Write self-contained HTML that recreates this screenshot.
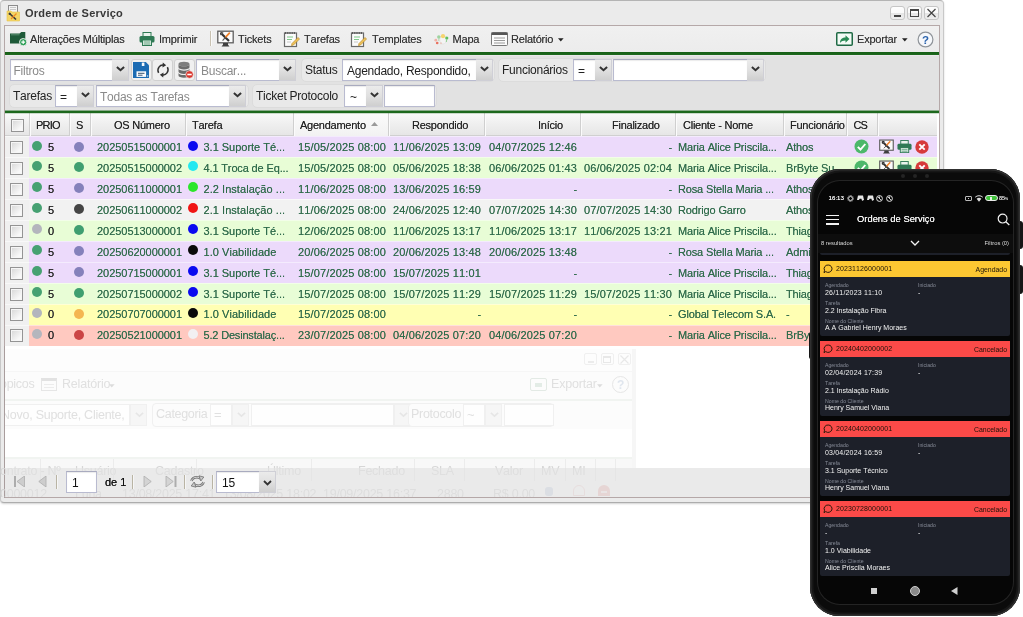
<!DOCTYPE html>
<html><head><meta charset="utf-8"><title>Ordem de Serviço</title>
<style>
*{margin:0;padding:0;box-sizing:border-box}
html,body{width:1023px;height:617px;overflow:hidden;background:#fff}
body{font-family:"Liberation Sans",sans-serif;font-size:11px;color:#222;position:relative;font-kerning:none;font-variant-ligatures:none}
#root{position:absolute;left:0;top:0;width:1023px;height:617px;overflow:hidden;will-change:transform;background:#fff}
.a{position:absolute}
.t{position:absolute;white-space:nowrap;line-height:14px;height:14px}
#win{left:0;top:0;width:944px;height:503px;background:#ebebeb;border:1px solid #c8c8c8;border-top-color:#b4b4b4;border-bottom-color:#adadad;border-radius:4px;box-shadow:0 1px 2px rgba(0,0,0,.18)}
#panel{left:4px;top:25px;width:936px;height:473px;border:1px solid #b5a8a8;background:#fff}
#tb1{left:5px;top:26px;width:934px;height:27px;background:linear-gradient(#f0f0f0,#ececec)}
.gl{left:5px;width:934px;height:2.600px;background:#1f6a1f}
#fbar{left:5px;top:55px;width:934px;height:58px;background:#e2e2e2}
.inp{position:absolute;background:#fff;border:1px solid #b9bbd0;border-top-color:#a9abbf;height:21px;box-shadow:inset 0 1px 1px rgba(0,0,0,.08)}
.trg{position:absolute;width:17px;height:21px;border:1px solid #cfcfd6;border-left:0;background:linear-gradient(#ebebeb,#e0e0e0 50%,#cfcfcf)}
.trg svg{position:absolute;left:4px;top:6px}
.grp{position:absolute;height:24px;border-radius:5px;background:#e9e9e9;border:1px solid #dcdcdc}
.f12{font-size:12px;color:#222;letter-spacing:-.25px}
.tb{color:#333;letter-spacing:-.2px;text-shadow:0 0 .3px rgba(50,50,50,.6)}
.ph{color:#8a8a8a}
#ghead{left:5px;top:113px;width:932px;height:23px;background:linear-gradient(#fafafa,#f0f0f0 45%,#e6e6e6);border-bottom:1px solid #d0d0d0}
.hs{position:absolute;top:113px;width:2px;height:23px;border-left:1px solid #cfcfcf;border-right:1px solid #fbfbfb}
.ht{top:118px;color:#222;letter-spacing:-.25px;text-shadow:0 0 .3px rgba(40,40,40,.7)}
.row{position:absolute;left:29px;width:908px;height:21px;border-top:1px solid rgba(255,255,255,.45)}
.ckc{position:absolute;left:5px;width:24px;height:21px;background:#f0f0f0;border-top:1px solid #f8f8f8}
.cb{position:absolute;left:10px;width:13px;height:13px;border:1px solid #949494;background:linear-gradient(135deg,#d6d6d6,#f8f8f8 75%);box-shadow:inset 0 0 0 1px #f6f6f6}
.dot{position:absolute;width:10px;height:10px;border-radius:50%}
.g{color:#2f6b4b;letter-spacing:-.15px;text-shadow:0 0 .35px rgba(47,107,75,.8)}
.d{letter-spacing:.15px}
.n{letter-spacing:-.05px}
.r{text-align:right}
</style></head>
<body>
<div id="root">
<div id="win" class="a"></div>
<div id="panel" class="a"></div>
<svg class="a" style="left:6px;top:4px" width="15" height="18" viewBox="0 0 15 18">
<rect x="2.5" y="1.5" width="9" height="7" fill="#f4f4f4" stroke="#8b8b8b"/>
<rect x="4" y="3" width="6" height="1" fill="#c8c8c8"/><rect x="4" y="5" width="6" height="1" fill="#c8c8c8"/>
<path d="M1 7 h4 l1 1 h7.5 v9 h-12.500z" fill="#f4d667" stroke="#e8c44a" stroke-width=".6"/>
<path d="M3.500 9.500 L10 15.500" stroke="#3a3a3a" stroke-width="1.700"/>
<path d="M3 9 l1.800 .5 M3 9 l.5 1.800" stroke="#3a3a3a" stroke-width="1.200"/>
<path d="M10.500 9.500 L5 15" stroke="#f08a24" stroke-width="1.300"/>
</svg>
<div class="t " style="left:25px;top:5.5px;font-weight:bold;font-size:11px;color:#383838;letter-spacing:0.24px">Ordem de Serviço</div>
<div class="a" style="left:890px;top:6px;width:15px;height:14px;border:1px solid #c6c6c6;border-radius:3px;background:linear-gradient(#fefefe,#fafafa 50%,#e6e6e6 52%,#efefef)"></div>
<div class="a" style="left:907px;top:6px;width:15px;height:14px;border:1px solid #c6c6c6;border-radius:3px;background:linear-gradient(#fefefe,#fafafa 50%,#e6e6e6 52%,#efefef)"></div>
<div class="a" style="left:924px;top:6px;width:15px;height:14px;border:1px solid #c6c6c6;border-radius:3px;background:linear-gradient(#fefefe,#fafafa 50%,#e6e6e6 52%,#efefef)"></div>
<div class="a" style="left:894px;top:15px;width:7px;height:2px;background:#444"></div>
<div class="a" style="left:910px;top:9px;width:9px;height:8px;border:1px solid #444;border-top-width:2px"></div>
<svg class="a" style="left:927px;top:8px" width="9" height="10" viewBox="0 0 9 10"><path d="M.5 1 L8.500 9 M8.500 1 L.5 9" stroke="#444" stroke-width="1.200"/></svg>
<div id="tb1" class="a"></div>
<div class="a gl" style="top:52px;height:3px;background:linear-gradient(#165e16,#1f6a1f)"></div><div class="a" style="left:5px;top:55px;width:934px;height:1px;background:#ebe8eb;z-index:1"></div>
<svg class="a" style="left:10px;top:32px" width="17" height="14" viewBox="0 0 17 14">
<path d="M0 1.500 h9.500 l1.800 -1.500 h4 v11.500 h-15.300z" fill="#1f5a39"/>
<path d="M1 2.800 h8.500" stroke="#5a8d6f" stroke-width="1"/>
<circle cx="13.200" cy="10.200" r="3.700" fill="#2fa058" stroke="#ececec" stroke-width="1"/>
<path d="M11.300 10.200 h3.800 M13.200 8.300 v3.800" stroke="#fff" stroke-width="1.200"/>
</svg>
<div class="t tb" style="left:30px;top:32px;">Alterações Múltiplas</div>
<svg class="a" style="left:139px;top:32px;opacity:1" width="16" height="14.0" viewBox="0 0 16 14">
<rect x="4" y=".5" width="8" height="4" fill="#e9f3ec" stroke="#2f7a55"/>
<rect x=".5" y="4" width="15" height="6.500" rx="1.500" fill="#2f7a55"/>
<rect x="3.500" y="8" width="9" height="5.500" fill="#cfe6d8" stroke="#2f7a55"/>
<path d="M5 10 h6 M5 12 h6" stroke="#5d9c7c" stroke-width=".8"/>
</svg>
<div class="t tb" style="left:159px;top:32px;">Imprimir</div>
<div class="a" style="left:210px;top:31px;width:2px;height:15px;border-left:1px solid #c9c2b2;border-right:1px solid #fafafa"></div>
<svg class="a" style="left:217px;top:30px" width="17.0" height="17.0" viewBox="0 0 17 17">
<rect x=".8" y="1.200" width="15.400" height="11.600" fill="#fbfbfb" stroke="#5e5e5e" stroke-width="1.300"/>
<path d="M4.500 16.400 h8 l-1.500 -1.600 v-1.800 h-5 v1.800z" fill="#3f3f3f"/>
<path d="M4.800 4 L12 11" stroke="#333" stroke-width="2.200"/>
<path d="M3.600 2.600 l2.600 .5 M3.600 2.600 l.5 2.600" stroke="#333" stroke-width="1.400"/>
<path d="M12.800 2.600 L8.400 7.400" stroke="#f0822a" stroke-width="1.700"/>
<path d="M8.400 7.400 L5.600 10.600" stroke="#555" stroke-width="1.100"/>
</svg>
<div class="t tb" style="left:238px;top:32px;">Tickets</div>
<svg class="a" style="left:283px;top:31px" width="18" height="17" viewBox="0 0 18 17">
<rect x="1.500" y="2" width="12" height="13.500" fill="#fbfbfb" stroke="#6a6a6a" stroke-width="1.200"/>
<path d="M2 2 h11" stroke="#444" stroke-width="1.600" stroke-dasharray="1.200 1"/>
<path d="M4 6 h6 M4 8.500 h5" stroke="#7fc98a" stroke-width="1.200"/>
<path d="M4 11 h4" stroke="#c8c8c8" stroke-width="1"/>
<path d="M9 12.500 L15 6.500 l1.500 1.500 L10.500 14 l-2 .6z" fill="#f1c45a" stroke="#b98b2a" stroke-width=".7"/>
</svg>
<div class="t tb" style="left:304px;top:32px;">Tarefas</div>
<svg class="a" style="left:350px;top:31px" width="18" height="17" viewBox="0 0 18 17">
<rect x="1.500" y="2" width="12" height="13.500" fill="#fbfbfb" stroke="#6a6a6a" stroke-width="1.200"/>
<path d="M2 2 h11" stroke="#444" stroke-width="1.600" stroke-dasharray="1.200 1"/>
<path d="M4 6 h6 M4 8.500 h5" stroke="#7fc98a" stroke-width="1.200"/>
<path d="M4 11 h4" stroke="#c8c8c8" stroke-width="1"/>
<path d="M9 12.500 L15 6.500 l1.500 1.500 L10.500 14 l-2 .6z" fill="#f1c45a" stroke="#b98b2a" stroke-width=".7"/>
</svg>
<div class="t tb" style="left:372px;top:32px;">Templates</div>
<svg class="a" style="left:433px;top:32px" width="16" height="14" viewBox="0 0 16 14">
<ellipse cx="10" cy="7.500" rx="3.200" ry="4.500" fill="#f4f4f4" stroke="#dcdcdc" stroke-width=".6"/>
<circle cx="10" cy="4.200" r="2.100" fill="#f5d46e"/>
<circle cx="5.800" cy="5" r="1.700" fill="#9fd39f"/><path d="M5.800 6 v3" stroke="#b5d9b5"/>
<circle cx="13.800" cy="6" r="1.600" fill="#5fbf5f"/><path d="M13.800 7 l-.5 3" stroke="#8fcf8f"/>
<circle cx="2.800" cy="8.200" r="1.400" fill="#f0b2a8"/>
<circle cx="4.200" cy="11" r="1.300" fill="#e8705e"/>
<circle cx="8" cy="11.300" r="1" fill="#e9c9c0"/>
</svg>
<div class="t tb" style="left:452.5px;top:32px;">Mapa</div>
<svg class="a" style="left:491px;top:32px" width="17" height="14" viewBox="0 0 17 14">
<rect x=".5" y=".5" width="16" height="13" rx="1" fill="#fbfbfb" stroke="#7a7a7a"/>
<rect x=".5" y=".5" width="16" height="2.500" fill="#555"/>
<path d="M3 6 h11 M3 8.500 h11 M3 11 h11" stroke="#9a9a9a" stroke-width="1"/>
</svg>
<div class="t tb" style="left:511px;top:32px;">Relatório</div>
<svg class="a" style="left:558px;top:38px" width="6" height="4"><path d="M0 .3 h5.600 l-2.800 3.200z" fill="#222"/></svg>
<svg class="a" style="left:836px;top:32px" width="17" height="14" viewBox="0 0 17 14">
<rect x=".75" y=".75" width="15.500" height="12.500" rx="1" fill="#f4fbf6" stroke="#1f6a45" stroke-width="1.500"/>
<path d="M4 11 c0 -4 2.500 -5.500 5.500 -5.500 v-2.200 l4 3.700 l-4 3.700 v-2.300 c-2.500 0 -4 .6 -5.500 2.600z" fill="#2a8a55"/>
</svg>
<div class="t tb" style="left:857px;top:32px;">Exportar</div>
<svg class="a" style="left:902px;top:38px" width="6" height="4"><path d="M0 .3 h5.600 l-2.800 3.200z" fill="#222"/></svg>
<svg class="a" style="left:917px;top:31px" width="17" height="17" viewBox="0 0 17 17">
<circle cx="8.500" cy="8.500" r="7.400" fill="#f6f8fb" stroke="#8f9499" stroke-width="1.200"/>
<text x="8.500" y="12.600" text-anchor="middle" font-family="Liberation Sans" font-weight="bold" font-size="11.500" fill="#2c64ad">?</text>
</svg>
<div id="fbar" class="a"></div>
<div class="a gl" style="top:110px;height:4px;background:linear-gradient(to bottom,rgba(31,106,31,.45) 0,rgba(31,106,31,.45) 1px,#1d681d 1px,#1d681d 3px,rgba(31,106,31,.22) 3px,rgba(31,106,31,.22) 4px);z-index:2"></div>
<div class="inp" style="left:9.5px;top:59px;width:103.5px;height:22px"><div class="t f12 ph" style="left:3px;top:4px">Filtros</div></div>
<div class="trg" style="left:112px;top:59px;height:22px"><svg width="9" height="6" viewBox="0 0 9 6"><path d="M.9 .9 L4.500 4.200 L8.100 .9" fill="none" stroke="#333" stroke-width="2"/></svg></div>
<div class="a" style="left:131px;top:59px;width:21px;height:22px;border:1px solid #d0d0d0;border-radius:3px;background:#f0f0f0"></div>
<svg class="a" style="left:133px;top:62px" width="16" height="16" viewBox="0 0 16 16">
<path d="M0 0 h12.800 l3.200 3.200 v12.800 h-16z" fill="#1b6bb3"/>
<rect x="8.800" y=".6" width="2.600" height="3.400" fill="#f4f8fc"/>
<rect x="3.500" y="9.300" width="9.600" height="5.600" fill="#fbfcfe"/>
<path d="M5 11.300 h6.500 M5 13.200 h4.500" stroke="#34506e" stroke-width="1"/>
<rect x="14.200" y="13.300" width="1" height="1.400" fill="#dfeaf5"/>
</svg>
<div class="a" style="left:152px;top:59px;width:21px;height:22px;border:1px solid #d0d0d0;border-radius:3px;background:#f0f0f0"></div>
<svg class="a" style="left:156px;top:62px" width="14" height="16" viewBox="0 0 14 16">
<path d="M2.600 10.800 A4.900 5.200 0 0 1 8 3.200" fill="none" stroke="#333" stroke-width="1.500"/>
<path d="M6.800 .6 l3.400 2.700 l-3.700 2.100z" fill="#333"/>
<path d="M11.400 5.200 A4.900 5.200 0 0 1 6 12.800" fill="none" stroke="#333" stroke-width="1.500"/>
<path d="M7.200 15.400 l-3.400 -2.700 l3.700 -2.100z" fill="#333"/>
</svg>
<div class="a" style="left:174px;top:59px;width:21px;height:22px;border:1px solid #d0d0d0;border-radius:3px;background:#f0f0f0"></div>
<svg class="a" style="left:177px;top:61px" width="17" height="18" viewBox="0 0 17 18">
<ellipse cx="7" cy="3" rx="5.500" ry="2.300" fill="#7d7d7d"/>
<path d="M1.500 3 v3.200 a5.500 2.300 0 0 0 11 0 v-3.200 a5.500 2.300 0 0 1 -11 0z" fill="#6c6c6c"/>
<path d="M1.500 7.400 v3.200 a5.500 2.300 0 0 0 11 0 v-3.200 a5.500 2.300 0 0 1 -11 0z" fill="#6c6c6c"/>
<path d="M1.500 11.800 v2.600 a5.500 2.300 0 0 0 11 0 v-2.600 a5.500 2.300 0 0 1 -11 0z" fill="#6c6c6c"/>
<circle cx="12.500" cy="13.500" r="3.800" fill="#d9342b" stroke="#f0f0f0" stroke-width=".6"/>
<rect x="10.300" y="12.700" width="4.400" height="1.600" fill="#fff"/>
</svg>
<div class="inp" style="left:196px;top:59px;width:84px;height:22px"><div class="t f12 ph" style="left:4px;top:4px">Buscar...</div></div>
<div class="trg" style="left:279px;top:59px;height:22px"><svg width="9" height="6" viewBox="0 0 9 6"><path d="M.9 .9 L4.500 4.200 L8.100 .9" fill="none" stroke="#333" stroke-width="2"/></svg></div>
<div class="grp" style="left:301px;top:58px;width:194px"></div>
<div class="t f12" style="left:305px;top:63px;">Status</div>
<div class="inp" style="left:342px;top:59px;width:135px;height:22px"><div class="t f12" style="left:4px;top:4px">Agendado, Respondido,</div></div>
<div class="trg" style="left:476px;top:59px;height:22px"><svg width="9" height="6" viewBox="0 0 9 6"><path d="M.9 .9 L4.500 4.200 L8.100 .9" fill="none" stroke="#333" stroke-width="2"/></svg></div>
<div class="grp" style="left:498px;top:58px;width:268px"></div>
<div class="t f12" style="left:502px;top:63px;">Funcionários</div>
<div class="inp" style="left:573px;top:59px;width:23px;height:22px"><div class="t f12" style="left:4px;top:4px">=</div></div>
<div class="trg" style="left:595px;top:59px;height:22px"><svg width="9" height="6" viewBox="0 0 9 6"><path d="M.9 .9 L4.500 4.200 L8.100 .9" fill="none" stroke="#333" stroke-width="2"/></svg></div>
<div class="inp" style="left:613px;top:59px;width:135px;height:22px"><div class="t f12" style="left:4px;top:4px"></div></div>
<div class="trg" style="left:747px;top:59px;height:22px"><svg width="9" height="6" viewBox="0 0 9 6"><path d="M.9 .9 L4.500 4.200 L8.100 .9" fill="none" stroke="#333" stroke-width="2"/></svg></div>
<div class="grp" style="left:9px;top:84px;width:240px"></div>
<div class="t f12" style="left:13px;top:88.5px;">Tarefas</div>
<div class="inp" style="left:55px;top:85px;width:23px;height:22px"><div class="t f12" style="left:4px;top:3.5px">=</div></div>
<div class="trg" style="left:77px;top:85px;height:22px"><svg width="9" height="6" viewBox="0 0 9 6"><path d="M.9 .9 L4.500 4.200 L8.100 .9" fill="none" stroke="#333" stroke-width="2"/></svg></div>
<div class="inp" style="left:96px;top:85px;width:134px;height:22px"><div class="t f12 ph" style="left:3px;top:3.5px">Todas as Tarefas</div></div>
<div class="trg" style="left:229px;top:85px;height:22px"><svg width="9" height="6" viewBox="0 0 9 6"><path d="M.9 .9 L4.500 4.200 L8.100 .9" fill="none" stroke="#333" stroke-width="2"/></svg></div>
<div class="grp" style="left:252px;top:84px;width:185px"></div>
<div class="t f12" style="left:256px;top:88.5px;">Ticket Protocolo</div>
<div class="inp" style="left:344px;top:85px;width:23px;height:22px"><div class="t f12" style="left:5px;top:3.5px">~</div></div>
<div class="trg" style="left:366px;top:85px;height:22px"><svg width="9" height="6" viewBox="0 0 9 6"><path d="M.9 .9 L4.500 4.200 L8.100 .9" fill="none" stroke="#333" stroke-width="2"/></svg></div>
<div class="inp" style="left:384px;top:85px;width:51px;height:22px"><div class="t f12" style="left:4px;top:3.5px"></div></div>
<div id="ghead" class="a"></div>
<div class="a" style="left:294px;top:113px;width:94px;height:23px;background:linear-gradient(#fbfbfb,#f2f2f2)"></div>
<div class="hs" style="left:28.5px"></div>
<div class="hs" style="left:68.5px"></div>
<div class="hs" style="left:89.5px"></div>
<div class="hs" style="left:184.5px"></div>
<div class="hs" style="left:293.0px"></div>
<div class="hs" style="left:388.0px"></div>
<div class="hs" style="left:483.5px"></div>
<div class="hs" style="left:579.5px"></div>
<div class="hs" style="left:675.0px"></div>
<div class="hs" style="left:782.5px"></div>
<div class="hs" style="left:846.0px"></div>
<div class="hs" style="left:876.5px"></div>
<div class="cb" style="top:119px;left:11px"></div>
<div class="t ht" style="left:36px;top:118px;letter-spacing:-.8px">PRIO</div>
<div class="t ht" style="left:76px;top:118px;">S</div>
<div class="t ht" style="left:114px;top:118px;">OS Número</div>
<div class="t ht" style="left:192px;top:118px;">Tarefa</div>
<div class="t ht" style="left:300px;top:118px;">Agendamento</div>
<svg class="a" style="left:371px;top:122px" width="7" height="4"><path d="M0 4 L3.500 0 L7 4z" fill="#9a9a9a"/></svg>
<div class="t ht" style="left:412px;top:118px;">Respondido</div>
<div class="t ht" style="left:538px;top:118px;">Início</div>
<div class="t ht" style="left:612px;top:118px;">Finalizado</div>
<div class="t ht" style="left:683px;top:118px;">Cliente - Nome</div>
<div class="t ht" style="left:790px;top:118px;">Funcionário</div>
<div class="t ht" style="left:853.5px;top:118px;letter-spacing:-1px">CS</div>
<div class="ckc" style="top:136px"></div>
<div class="row" style="top:136px;background:#ecdafb"></div>
<div class="cb" style="top:141.0px"></div>
<div class="dot" style="left:32px;top:140.5px;background:#46a172"></div>
<div class="t " style="left:48px;top:140.0px;color:#2c2c2c;font-size:11px;text-shadow:0 0 .6px #333">5</div>
<div class="dot" style="left:74px;top:141.5px;background:#8581bb"></div>
<div class="t r g n" style="right:841px;top:140.0px;">20250515000001</div>
<div class="dot" style="left:188px;top:140.5px;background:#0a0af0"></div>
<div class="t g" style="left:203.5px;top:140.0px;letter-spacing:-0.02px">3.1 Suporte Té...</div>
<div class="t g d" style="left:298px;top:140.0px;">15/05/2025 08:00</div>
<div class="t r g d" style="right:542px;top:140.0px;">11/06/2025 13:09</div>
<div class="t r g d" style="right:446px;top:140.0px;">04/07/2025 12:46</div>
<div class="t r g" style="right:351px;top:140.0px;">-</div>
<div class="t g" style="left:678px;top:140.0px;">Maria Alice Priscila...</div>
<div class="t g" style="left:786px;top:140.0px;">Athos</div>
<svg class="a" style="left:854px;top:139.0px" width="15" height="15" viewBox="0 0 15 15">
<circle cx="7.500" cy="7.500" r="7" fill="#4cb86a"/>
<path d="M3.800 7.800 L6.500 10.500 L11.300 5" fill="none" stroke="#fff" stroke-width="1.900"/>
</svg>
<svg class="a" style="left:879px;top:139.0px" width="14.96" height="14.96" viewBox="0 0 17 17">
<rect x=".8" y="1.200" width="15.400" height="11.600" fill="#fbfbfb" stroke="#5e5e5e" stroke-width="1.300"/>
<path d="M4.500 16.400 h8 l-1.500 -1.600 v-1.800 h-5 v1.800z" fill="#3f3f3f"/>
<path d="M4.800 4 L12 11" stroke="#333" stroke-width="2.200"/>
<path d="M3.600 2.600 l2.600 .5 M3.600 2.600 l.5 2.600" stroke="#333" stroke-width="1.400"/>
<path d="M12.800 2.600 L8.400 7.400" stroke="#f0822a" stroke-width="1.700"/>
<path d="M8.400 7.400 L5.600 10.600" stroke="#555" stroke-width="1.100"/>
</svg>
<svg class="a" style="left:897px;top:140.0px;opacity:1" width="15" height="13.125" viewBox="0 0 16 14">
<rect x="4" y=".5" width="8" height="4" fill="#e9f3ec" stroke="#2f7a55"/>
<rect x=".5" y="4" width="15" height="6.500" rx="1.500" fill="#2f7a55"/>
<rect x="3.500" y="8" width="9" height="5.500" fill="#cfe6d8" stroke="#2f7a55"/>
<path d="M5 10 h6 M5 12 h6" stroke="#5d9c7c" stroke-width=".8"/>
</svg>
<svg class="a" style="left:915px;top:140.0px" width="14" height="14" viewBox="0 0 14 14">
<circle cx="7" cy="7" r="6.700" fill="#d63a3a"/>
<path d="M4.300 4.300 L9.700 9.700 M9.700 4.300 L4.300 9.700" stroke="#fff" stroke-width="1.900"/>
</svg>
<div class="ckc" style="top:157px"></div>
<div class="row" style="top:157px;background:#e8fdd6"></div>
<div class="cb" style="top:161.93px"></div>
<div class="dot" style="left:32px;top:161.43px;background:#46a172"></div>
<div class="t " style="left:48px;top:160.93px;color:#2c2c2c;font-size:11px;text-shadow:0 0 .6px #333">5</div>
<div class="dot" style="left:74px;top:162.43px;background:#3f9f70"></div>
<div class="t r g n" style="right:841px;top:160.93px;">20250515000002</div>
<div class="dot" style="left:188px;top:161.43px;background:#22e8f0"></div>
<div class="t g" style="left:203.5px;top:160.93px;letter-spacing:-0.14px">4.1 Troca de Eq...</div>
<div class="t g d" style="left:298px;top:160.93px;">15/05/2025 08:00</div>
<div class="t r g d" style="right:542px;top:160.93px;">05/06/2025 18:38</div>
<div class="t r g d" style="right:446px;top:160.93px;">06/06/2025 01:43</div>
<div class="t r g d" style="right:351px;top:160.93px;">06/06/2025 02:04</div>
<div class="t g" style="left:678px;top:160.93px;">Maria Alice Priscila...</div>
<div class="t g" style="left:786px;top:160.93px;">BrByte Su...</div>
<svg class="a" style="left:854px;top:159.93px" width="15" height="15" viewBox="0 0 15 15">
<circle cx="7.500" cy="7.500" r="7" fill="#4cb86a"/>
<path d="M3.800 7.800 L6.500 10.500 L11.300 5" fill="none" stroke="#fff" stroke-width="1.900"/>
</svg>
<svg class="a" style="left:879px;top:159.93px" width="14.96" height="14.96" viewBox="0 0 17 17">
<rect x=".8" y="1.200" width="15.400" height="11.600" fill="#fbfbfb" stroke="#5e5e5e" stroke-width="1.300"/>
<path d="M4.500 16.400 h8 l-1.500 -1.600 v-1.800 h-5 v1.800z" fill="#3f3f3f"/>
<path d="M4.800 4 L12 11" stroke="#333" stroke-width="2.200"/>
<path d="M3.600 2.600 l2.600 .5 M3.600 2.600 l.5 2.600" stroke="#333" stroke-width="1.400"/>
<path d="M12.800 2.600 L8.400 7.400" stroke="#f0822a" stroke-width="1.700"/>
<path d="M8.400 7.400 L5.600 10.600" stroke="#555" stroke-width="1.100"/>
</svg>
<svg class="a" style="left:897px;top:160.93px;opacity:1" width="15" height="13.125" viewBox="0 0 16 14">
<rect x="4" y=".5" width="8" height="4" fill="#e9f3ec" stroke="#2f7a55"/>
<rect x=".5" y="4" width="15" height="6.500" rx="1.500" fill="#2f7a55"/>
<rect x="3.500" y="8" width="9" height="5.500" fill="#cfe6d8" stroke="#2f7a55"/>
<path d="M5 10 h6 M5 12 h6" stroke="#5d9c7c" stroke-width=".8"/>
</svg>
<svg class="a" style="left:915px;top:160.93px" width="14" height="14" viewBox="0 0 14 14">
<circle cx="7" cy="7" r="6.700" fill="#d63a3a"/>
<path d="M4.300 4.300 L9.700 9.700 M9.700 4.300 L4.300 9.700" stroke="#fff" stroke-width="1.900"/>
</svg>
<div class="ckc" style="top:178px"></div>
<div class="row" style="top:178px;background:#ecdafb"></div>
<div class="cb" style="top:182.86px"></div>
<div class="dot" style="left:32px;top:182.36px;background:#46a172"></div>
<div class="t " style="left:48px;top:181.86px;color:#2c2c2c;font-size:11px;text-shadow:0 0 .6px #333">5</div>
<div class="dot" style="left:74px;top:183.36px;background:#8581bb"></div>
<div class="t r g n" style="right:841px;top:181.86px;">20250611000001</div>
<div class="dot" style="left:188px;top:182.36px;background:#2be62b"></div>
<div class="t g" style="left:203.5px;top:181.86px;letter-spacing:0.05px">2.2 Instalação ...</div>
<div class="t g d" style="left:298px;top:181.86px;">11/06/2025 08:00</div>
<div class="t r g d" style="right:542px;top:181.86px;">13/06/2025 16:59</div>
<div class="t r g" style="right:446px;top:181.86px;">-</div>
<div class="t r g" style="right:351px;top:181.86px;">-</div>
<div class="t g" style="left:678px;top:181.86px;">Rosa Stella Maria ...</div>
<div class="t g" style="left:786px;top:181.86px;">Athos</div>
<div class="ckc" style="top:199px"></div>
<div class="row" style="top:199px;background:#f2f2f2"></div>
<div class="cb" style="top:203.79px"></div>
<div class="dot" style="left:32px;top:203.29px;background:#46a172"></div>
<div class="t " style="left:48px;top:202.79px;color:#2c2c2c;font-size:11px;text-shadow:0 0 .6px #333">5</div>
<div class="dot" style="left:74px;top:204.29px;background:#454545"></div>
<div class="t r g n" style="right:841px;top:202.79px;">20250611000002</div>
<div class="dot" style="left:188px;top:203.29px;background:#f01414"></div>
<div class="t g" style="left:203.5px;top:202.79px;letter-spacing:0.05px">2.1 Instalação ...</div>
<div class="t g d" style="left:298px;top:202.79px;">11/06/2025 08:00</div>
<div class="t r g d" style="right:542px;top:202.79px;">24/06/2025 12:40</div>
<div class="t r g d" style="right:446px;top:202.79px;">07/07/2025 14:30</div>
<div class="t r g d" style="right:351px;top:202.79px;">07/07/2025 14:30</div>
<div class="t g" style="left:678px;top:202.79px;">Rodrigo Garro</div>
<div class="t g" style="left:786px;top:202.79px;">Athos</div>
<div class="ckc" style="top:220px"></div>
<div class="row" style="top:220px;background:#e8fdd6"></div>
<div class="cb" style="top:224.72px"></div>
<div class="dot" style="left:32px;top:224.22px;background:#b4b6bd"></div>
<div class="t " style="left:48px;top:223.72px;color:#2c2c2c;font-size:11px;text-shadow:0 0 .6px #333">0</div>
<div class="dot" style="left:74px;top:225.22px;background:#3f9f70"></div>
<div class="t r g n" style="right:841px;top:223.72px;">20250513000001</div>
<div class="dot" style="left:188px;top:224.22px;background:#0a0af0"></div>
<div class="t g" style="left:203.5px;top:223.72px;letter-spacing:-0.02px">3.1 Suporte Té...</div>
<div class="t g d" style="left:298px;top:223.72px;">12/06/2025 08:00</div>
<div class="t r g d" style="right:542px;top:223.72px;">11/06/2025 13:17</div>
<div class="t r g d" style="right:446px;top:223.72px;">11/06/2025 13:17</div>
<div class="t r g d" style="right:351px;top:223.72px;">11/06/2025 13:21</div>
<div class="t g" style="left:678px;top:223.72px;">Maria Alice Priscila...</div>
<div class="t g" style="left:786px;top:223.72px;">Thiag...</div>
<div class="ckc" style="top:241px"></div>
<div class="row" style="top:241px;background:#ecdafb"></div>
<div class="cb" style="top:245.65px"></div>
<div class="dot" style="left:32px;top:245.15px;background:#46a172"></div>
<div class="t " style="left:48px;top:244.65px;color:#2c2c2c;font-size:11px;text-shadow:0 0 .6px #333">5</div>
<div class="dot" style="left:74px;top:246.15px;background:#8581bb"></div>
<div class="t r g n" style="right:841px;top:244.65px;">20250620000001</div>
<div class="dot" style="left:188px;top:245.15px;background:#0a0a0a"></div>
<div class="t g" style="left:203.5px;top:244.65px;letter-spacing:0.05px">1.0 Viabilidade</div>
<div class="t g d" style="left:298px;top:244.65px;">20/06/2025 08:00</div>
<div class="t r g d" style="right:542px;top:244.65px;">20/06/2025 13:48</div>
<div class="t r g d" style="right:446px;top:244.65px;">20/06/2025 13:48</div>
<div class="t r g" style="right:351px;top:244.65px;">-</div>
<div class="t g" style="left:678px;top:244.65px;">Rosa Stella Maria ...</div>
<div class="t g" style="left:786px;top:244.65px;">Admi...</div>
<div class="ckc" style="top:262px"></div>
<div class="row" style="top:262px;background:#ecdafb"></div>
<div class="cb" style="top:266.58px"></div>
<div class="dot" style="left:32px;top:266.08px;background:#46a172"></div>
<div class="t " style="left:48px;top:265.58px;color:#2c2c2c;font-size:11px;text-shadow:0 0 .6px #333">5</div>
<div class="dot" style="left:74px;top:267.08px;background:#8581bb"></div>
<div class="t r g n" style="right:841px;top:265.58px;">20250715000001</div>
<div class="dot" style="left:188px;top:266.08px;background:#0a0af0"></div>
<div class="t g" style="left:203.5px;top:265.58px;letter-spacing:-0.02px">3.1 Suporte Té...</div>
<div class="t g d" style="left:298px;top:265.58px;">15/07/2025 08:00</div>
<div class="t r g d" style="right:542px;top:265.58px;">15/07/2025 11:01</div>
<div class="t r g" style="right:446px;top:265.58px;">-</div>
<div class="t r g" style="right:351px;top:265.58px;">-</div>
<div class="t g" style="left:678px;top:265.58px;">Maria Alice Priscila...</div>
<div class="t g" style="left:786px;top:265.58px;">Thiag...</div>
<div class="ckc" style="top:283px"></div>
<div class="row" style="top:283px;background:#e8fdd6"></div>
<div class="cb" style="top:287.51px"></div>
<div class="dot" style="left:32px;top:287.01px;background:#46a172"></div>
<div class="t " style="left:48px;top:286.51px;color:#2c2c2c;font-size:11px;text-shadow:0 0 .6px #333">5</div>
<div class="dot" style="left:74px;top:288.01px;background:#3f9f70"></div>
<div class="t r g n" style="right:841px;top:286.51px;">20250715000002</div>
<div class="dot" style="left:188px;top:287.01px;background:#0a0af0"></div>
<div class="t g" style="left:203.5px;top:286.51px;letter-spacing:-0.02px">3.1 Suporte Té...</div>
<div class="t g d" style="left:298px;top:286.51px;">15/07/2025 08:00</div>
<div class="t r g d" style="right:542px;top:286.51px;">15/07/2025 11:29</div>
<div class="t r g d" style="right:446px;top:286.51px;">15/07/2025 11:29</div>
<div class="t r g d" style="right:351px;top:286.51px;">15/07/2025 11:30</div>
<div class="t g" style="left:678px;top:286.51px;">Maria Alice Priscila...</div>
<div class="t g" style="left:786px;top:286.51px;">Thiag...</div>
<div class="ckc" style="top:304px"></div>
<div class="row" style="top:304px;background:#ffffb3"></div>
<div class="cb" style="top:308.44px"></div>
<div class="dot" style="left:32px;top:307.94px;background:#b4b6bd"></div>
<div class="t " style="left:48px;top:307.44px;color:#2c2c2c;font-size:11px;text-shadow:0 0 .6px #333">0</div>
<div class="dot" style="left:74px;top:308.94px;background:#f4b650"></div>
<div class="t r g n" style="right:841px;top:307.44px;">20250707000001</div>
<div class="dot" style="left:188px;top:307.94px;background:#0a0a0a"></div>
<div class="t g" style="left:203.5px;top:307.44px;letter-spacing:0.05px">1.0 Viabilidade</div>
<div class="t g d" style="left:298px;top:307.44px;">15/07/2025 08:00</div>
<div class="t r g" style="right:542px;top:307.44px;">-</div>
<div class="t r g" style="right:446px;top:307.44px;">-</div>
<div class="t r g" style="right:351px;top:307.44px;">-</div>
<div class="t g" style="left:678px;top:307.44px;">Global Telecom S.A.</div>
<div class="t g" style="left:786px;top:307.44px;">-</div>
<div class="ckc" style="top:325px"></div>
<div class="row" style="top:325px;background:#ffc9c0"></div>
<div class="cb" style="top:329.37px"></div>
<div class="dot" style="left:32px;top:328.87px;background:#b4b6bd"></div>
<div class="t " style="left:48px;top:328.37px;color:#2c2c2c;font-size:11px;text-shadow:0 0 .6px #333">0</div>
<div class="dot" style="left:74px;top:329.87px;background:#cb4545"></div>
<div class="t r g n" style="right:841px;top:328.37px;">20250521000001</div>
<div class="dot" style="left:188px;top:328.87px;background:#f2f0f2"></div>
<div class="t g" style="left:203.5px;top:328.37px;letter-spacing:-0.18px">5.2 Desinstalaç...</div>
<div class="t g d" style="left:298px;top:328.37px;">23/07/2025 08:00</div>
<div class="t r g d" style="right:542px;top:328.37px;">04/06/2025 07:20</div>
<div class="t r g d" style="right:446px;top:328.37px;">04/06/2025 07:20</div>
<div class="t r g" style="right:351px;top:328.37px;">-</div>
<div class="t g" style="left:678px;top:328.37px;">Maria Alice Priscila...</div>
<div class="t g" style="left:786px;top:328.37px;">BrBy...</div>
<div class="a" style="left:5px;top:349px;width:629px;height:23px;background:#fdfdfd"></div>
<div class="a" style="left:5px;top:371px;width:629px;height:1px;background:#f6f6f6"></div>
<div class="a" style="left:5px;top:372px;width:629px;height:27px;background:#fcfcfc"></div>
<div class="a" style="left:5px;top:399px;width:629px;height:2px;background:#f1f4f1"></div>
<div class="a" style="left:5px;top:401px;width:629px;height:28px;background:#fcfcfc"></div>
<div class="a" style="left:5px;top:457px;width:629px;height:2px;background:#f1f4f1"></div>
<div class="a" style="left:5px;top:459px;width:629px;height:9px;background:#f8f8f8"></div>
<div class="a" style="left:632px;top:349px;width:4px;height:119px;background:#f6f6f6"></div>
<div class="a" style="left:-2px;top:404px;width:132px;height:22px;border:1px solid #f0f0f0;background:#fefefe;"></div>
<div class="a" style="left:130px;top:404px;width:17px;height:22px;border:1px solid #f0f0f0;background:#fefefe;background:#f6f6f6"></div>
<div class="a" style="left:152px;top:403px;width:262px;height:24px;border:1px solid #f0f0f0;background:#fefefe;border-radius:4px;background:#fcfcfc"></div>
<div class="a" style="left:210px;top:404px;width:22px;height:22px;border:1px solid #f0f0f0;background:#fefefe;"></div>
<div class="a" style="left:232px;top:404px;width:17px;height:22px;border:1px solid #f0f0f0;background:#fefefe;background:#f6f6f6"></div>
<div class="a" style="left:251px;top:404px;width:143px;height:22px;border:1px solid #f0f0f0;background:#fefefe;"></div>
<div class="a" style="left:394px;top:404px;width:17px;height:22px;border:1px solid #f0f0f0;background:#fefefe;background:#f6f6f6"></div>
<div class="a" style="left:408px;top:403px;width:146px;height:24px;border:1px solid #f0f0f0;background:#fefefe;border-radius:4px;background:#fcfcfc"></div>
<div class="a" style="left:463px;top:404px;width:22px;height:22px;border:1px solid #f0f0f0;background:#fefefe;"></div>
<div class="a" style="left:485px;top:404px;width:17px;height:22px;border:1px solid #f0f0f0;background:#fefefe;background:#f6f6f6"></div>
<div class="a" style="left:504px;top:404px;width:50px;height:22px;border:1px solid #f0f0f0;background:#fefefe;"></div>
<div class="t " style="left:0px;top:377px;color:#e0e0e0;font-size:12.500px;letter-spacing:-.3px">ópicos</div>
<div class="a" style="left:41px;top:378px;width:16px;height:13px;border:1px solid #e6e6e6;border-top:3px solid #e2e2e2"></div>
<div class="a" style="left:44px;top:384px;width:10px;height:1px;background:#ececec"></div><div class="a" style="left:44px;top:387px;width:10px;height:1px;background:#ececec"></div>
<div class="t " style="left:62px;top:377px;color:#e0e0e0;font-size:12.500px;letter-spacing:-.2px">Relatório</div>
<svg class="a" style="left:109px;top:384px" width="6" height="4"><path d="M0 .3 h5.600 l-2.800 3.200z" fill="#dcdcdc"/></svg>
<div class="t " style="left:1px;top:408px;color:#e0e0e0;font-size:12.500px;letter-spacing:-.25px">Novo, Suporte, Cliente,</div>
<div class="t " style="left:156px;top:407px;color:#e0e0e0;font-size:12.500px;letter-spacing:-.3px">Categoria</div>
<div class="t " style="left:214px;top:408px;color:#e0e0e0;font-size:13px">=</div>
<div class="t " style="left:411px;top:407px;color:#e0e0e0;font-size:12.500px;letter-spacing:-.3px">Protocolo</div>
<div class="t " style="left:467px;top:408px;color:#e0e0e0;font-size:13px">~</div>
<svg class="a" style="left:135px;top:412px" width="9" height="6" viewBox="0 0 9 6"><path d="M.9 .9 L4.500 4.200 L8.100 .9" fill="none" stroke="#e6e6e6" stroke-width="1.600"/></svg>
<svg class="a" style="left:237px;top:412px" width="9" height="6" viewBox="0 0 9 6"><path d="M.9 .9 L4.500 4.200 L8.100 .9" fill="none" stroke="#e6e6e6" stroke-width="1.600"/></svg>
<svg class="a" style="left:399px;top:412px" width="9" height="6" viewBox="0 0 9 6"><path d="M.9 .9 L4.500 4.200 L8.100 .9" fill="none" stroke="#e6e6e6" stroke-width="1.600"/></svg>
<svg class="a" style="left:490px;top:412px" width="9" height="6" viewBox="0 0 9 6"><path d="M.9 .9 L4.500 4.200 L8.100 .9" fill="none" stroke="#e6e6e6" stroke-width="1.600"/></svg>
<div class="t " style="left:551px;top:377px;color:#e0e0e0;font-size:12.500px;letter-spacing:-.2px">Exportar</div>
<svg class="a" style="left:597px;top:384px" width="6" height="4"><path d="M0 .3 h5.600 l-2.800 3.200z" fill="#dcdcdc"/></svg>
<div class="a" style="left:530px;top:378px;width:17px;height:13px;border:1.500px solid #e3eae5;border-radius:2px"></div>
<div class="a" style="left:535px;top:383px;width:7px;height:4px;background:#e3ece6"></div>
<div class="a" style="left:612px;top:376px;width:17px;height:17px;border:1.500px solid #e6e6e6;border-radius:50%"></div>
<div class="t " style="left:617px;top:378px;color:#e0e6ee;font-weight:bold;font-size:12px">?</div>
<div class="a" style="left:584px;top:353px;width:13px;height:12px;border:1px solid #f0f0f0;border-radius:2px"></div>
<div class="a" style="left:601px;top:353px;width:13px;height:12px;border:1px solid #f0f0f0;border-radius:2px"></div>
<div class="a" style="left:618px;top:353px;width:13px;height:12px;border:1px solid #f0f0f0;border-radius:2px"></div>
<div class="a" style="left:588px;top:361px;width:6px;height:2px;background:#ececec"></div>
<div class="a" style="left:603px;top:356px;width:8px;height:7px;border:1px solid #e8e8e8;border-top-width:2px"></div>
<svg class="a" style="left:620px;top:355px" width="9" height="9" viewBox="0 0 9 9"><path d="M.5 .5 L8.500 8.500 M8.500 .5 L.5 8.500" stroke="#e8e8e8" stroke-width="1.200"/></svg>
<div class="a" style="left:0;top:346px;width:4px;height:152px;background:#ebebeb;border-left:1px solid #c8c8c8"></div>
<div class="a" style="left:4px;top:346px;width:1px;height:152px;background:#a99d9d"></div>
<div class="t f12" style="left:0px;top:464px;color:#d6d6d6;font-size:12.500px">ontrato - Nº</div>
<div class="t f12" style="left:75px;top:464px;color:#d6d6d6;font-size:12.500px">Usuário</div>
<div class="t f12" style="left:155px;top:464px;color:#d6d6d6;font-size:12.500px">Cadastro</div>
<div class="t f12" style="left:267px;top:464px;color:#d6d6d6;font-size:12.500px">Último</div>
<div class="t f12" style="left:358px;top:464px;color:#d6d6d6;font-size:12.500px">Fechado</div>
<div class="t f12" style="left:431px;top:464px;color:#d6d6d6;font-size:12.500px">SLA</div>
<div class="t f12" style="left:495px;top:464px;color:#d6d6d6;font-size:12.500px">Valor</div>
<div class="t f12" style="left:541px;top:464px;color:#d6d6d6;font-size:12.500px">MV</div>
<div class="t f12" style="left:572px;top:464px;color:#d6d6d6;font-size:12.500px">MI</div>
<div class="a" style="left:40px;top:459px;width:1px;height:22px;background:#ececec"></div>
<div class="a" style="left:113px;top:459px;width:1px;height:22px;background:#ececec"></div>
<div class="a" style="left:196px;top:459px;width:1px;height:22px;background:#ececec"></div>
<div class="a" style="left:311px;top:459px;width:1px;height:22px;background:#ececec"></div>
<div class="a" style="left:414px;top:459px;width:1px;height:22px;background:#ececec"></div>
<div class="a" style="left:464px;top:459px;width:1px;height:22px;background:#ececec"></div>
<div class="a" style="left:534px;top:459px;width:1px;height:22px;background:#ececec"></div>
<div class="a" style="left:565px;top:459px;width:1px;height:22px;background:#ececec"></div>
<div class="a" style="left:595px;top:459px;width:1px;height:22px;background:#ececec"></div>
<div class="a" style="left:615px;top:459px;width:1px;height:22px;background:#ececec"></div>
<div class="t f12" style="left:0px;top:486.5px;color:#d2d2d2;font-size:12.500px;height:10px;overflow:hidden">0000012</div>
<div class="t f12" style="left:75px;top:486.5px;color:#d2d2d2;font-size:12.500px;height:10px;overflow:hidden">Luna</div>
<div class="t f12" style="left:122px;top:486.5px;color:#d2d2d2;font-size:12.500px;height:10px;overflow:hidden">13/08/2025 17:41</div>
<div class="t f12" style="left:223px;top:486.5px;color:#d2d2d2;font-size:12.500px;height:10px;overflow:hidden">13/08/2025 18:02</div>
<div class="t f12" style="left:323px;top:486.5px;color:#d2d2d2;font-size:12.500px;height:10px;overflow:hidden">19/09/2025 16:37</div>
<div class="t f12" style="left:437px;top:486.5px;color:#d2d2d2;font-size:12.500px;height:10px;overflow:hidden">2880</div>
<div class="t f12" style="left:493px;top:486.5px;color:#d2d2d2;font-size:12.500px;height:10px;overflow:hidden">R$ 0,00</div>
<div class="a" style="left:545px;top:487px;width:8px;height:9px;border-radius:3px;background:#c9d3e6"></div>
<div class="a" style="left:573px;top:485px;width:12px;height:11px;border-radius:6px 6px 0 0;border:1.500px solid #f1cfcf"></div>
<div class="a" style="left:598px;top:485px;width:12px;height:11px;border-radius:6px 6px 0 0;background:#f0b4b0"></div>
<div class="a" style="left:601px;top:491px;width:6px;height:2px;background:#fbe9e9"></div>
<div class="a" style="left:5px;top:468px;width:934px;height:29px;background:rgba(226,226,226,.72)"></div>
<svg class="a" style="left:14px;top:476px" width="11" height="11"><rect x="0" y="0" width="2" height="11" fill="#adadad"/><path d="M10.500 0 L3 5.500 L10.500 11z" fill="#cdcdcd" stroke="#adadad" stroke-width=".8"/></svg>
<svg class="a" style="left:38px;top:476px" width="9" height="11"><path d="M8 0 L.8 5.500 L8 11z" fill="#cdcdcd" stroke="#adadad" stroke-width=".8"/></svg>
<div class="a" style="left:56px;top:475px;width:2px;height:14px;border-left:1px solid #b9b4a4;border-right:1px solid #f6f6f6"></div>
<div class="a" style="left:132px;top:475px;width:2px;height:14px;border-left:1px solid #b9b4a4;border-right:1px solid #f6f6f6"></div>
<div class="a" style="left:184px;top:475px;width:2px;height:14px;border-left:1px solid #b9b4a4;border-right:1px solid #f6f6f6"></div>
<div class="a" style="left:212px;top:475px;width:2px;height:14px;border-left:1px solid #b9b4a4;border-right:1px solid #f6f6f6"></div>
<div class="inp" style="left:66px;top:471px;width:31px;height:22px"><div class="t f12" style="left:5px;top:4px;color:#111">1</div></div>
<div class="t " style="left:105px;top:475px;font-size:11px;color:#111;text-shadow:0 0 .5px #333">de 1</div>
<svg class="a" style="left:143px;top:476px" width="9" height="11"><path d="M1 0 L8.200 5.500 L1 11z" fill="#d4d4d4" stroke="#adadad" stroke-width=".8"/></svg>
<svg class="a" style="left:165px;top:476px" width="12" height="11"><path d="M1 0 L8.200 5.500 L1 11z" fill="#d4d4d4" stroke="#adadad" stroke-width=".8"/><rect x="9.500" y="0" width="2" height="11" fill="#adadad"/></svg>
<svg class="a" style="left:190px;top:474px" width="15" height="15" viewBox="0 0 15 15">
<path d="M1.500 7 C2 3.500 7 2 10.500 4.500" fill="none" stroke="#6f6f6f" stroke-width="2.400"/>
<path d="M1.500 7 C2 3.500 7 2 10.500 4.500" fill="none" stroke="#d8d8d8" stroke-width="1"/>
<path d="M9 1.800 l4.800 1.200 l-3 4z" fill="#c8c8c8" stroke="#6f6f6f" stroke-width=".8"/>
<path d="M13.500 8 C13 11.500 8 13 4.500 10.500" fill="none" stroke="#6f6f6f" stroke-width="2.400"/>
<path d="M13.500 8 C13 11.500 8 13 4.500 10.500" fill="none" stroke="#d8d8d8" stroke-width="1"/>
<path d="M6 13.200 l-4.800 -1.200 l3 -4z" fill="#c8c8c8" stroke="#6f6f6f" stroke-width=".8"/>
</svg>
<div class="inp" style="left:216px;top:471px;width:44px;height:22px"><div class="t f12" style="left:5px;top:4px;color:#111">15</div></div>
<div class="trg" style="left:259px;top:471px;height:22px"><svg style="left:4px;top:8px;position:absolute" width="9" height="6" viewBox="0 0 9 6"><path d="M1 1 L4.500 4.500 L8 1" fill="none" stroke="#333" stroke-width="1.800"/></svg></div>
<div class="a" style="left:1017px;top:221px;width:6px;height:28px;background:#161616;border-radius:0 3px 3px 0"></div>
<div class="a" style="left:1017px;top:265px;width:6px;height:29px;background:#161616;border-radius:0 3px 3px 0"></div>
<div class="a" style="left:808.500px;top:332px;width:4px;height:27px;background:#161616;border-radius:2px 0 0 2px"></div>
<div class="a" style="left:810px;top:169px;width:210px;height:447px;border-radius:30px 30px 29px 29px;background:#0b0b0b;box-shadow:inset 0 0 0 1.500px #303030, inset 0 0 0 3.500px #171717"></div>
<div class="a" style="left:818px;top:181px;width:195px;height:423px;border-radius:22px;background:#060606;box-shadow:0 0 0 1px #242424"></div>
<div class="a" style="left:901px;top:174px;width:4px;height:4px;border-radius:50%;background:#242424"></div>
<div class="a" style="left:913px;top:174px;width:4px;height:4px;border-radius:50%;background:#242424"></div>
<div class="a" style="left:925px;top:174px;width:4px;height:4px;border-radius:50%;background:#242424"></div>
<div class="t" style="left:828.5px;top:194px;font-size:6.2px;line-height:8.2px;height:8.2px;color:#ececec;font-weight:normal;text-shadow:0 0 .3px #fff">16:13</div>
<svg class="a" style="left:846.500px;top:194.500px" width="7" height="7" viewBox="0 0 7 7"><circle cx="3.500" cy="3.500" r="2" fill="none" stroke="#d8d8d8" stroke-width="1"/><circle cx="3.500" cy="3.500" r="3" fill="none" stroke="#d8d8d8" stroke-width="1" stroke-dasharray="1 1.300"/></svg>
<svg class="a" style="left:856.5px;top:195px" width="7" height="6" viewBox="0 0 7 6"><path d="M1 .5 h5 l1 4.500 h-2 l-.6 -1.200 h-1.800 l-.6 1.200 h-2z" fill="#e6e6e6"/><circle cx="5.600" cy="4.800" r=".9" fill="#e6e6e6"/></svg>
<svg class="a" style="left:866.5px;top:195px" width="7" height="6" viewBox="0 0 7 6"><path d="M1 .5 h5 l1 4.500 h-2 l-.6 -1.200 h-1.800 l-.6 1.200 h-2z" fill="#e6e6e6"/><circle cx="5.600" cy="4.800" r=".9" fill="#e6e6e6"/></svg>
<svg class="a" style="left:876px;top:194.500px" width="7" height="7" viewBox="0 0 7 7"><circle cx="3.500" cy="3.500" r="2.900" fill="none" stroke="#e2e2e2" stroke-width="1"/><path d="M1.800 1.800 L5.200 5.200 M3.500 1.500 v2" stroke="#e2e2e2" stroke-width=".9"/></svg>
<svg class="a" style="left:886px;top:194.500px" width="7" height="7" viewBox="0 0 7 7"><circle cx="3.500" cy="3.500" r="2.900" fill="none" stroke="#e2e2e2" stroke-width="1"/><path d="M1.800 1.800 L5.200 5.200 M3.500 1.500 v2" stroke="#e2e2e2" stroke-width=".9"/></svg>
<div class="a" style="left:964.500px;top:195.500px;width:7.500px;height:5.500px;border:1px solid #bbb;border-radius:1px"></div>
<div class="a" style="left:967.500px;top:197.500px;width:1.500px;height:1.500px;background:#ccc"></div>
<svg class="a" style="left:974.500px;top:194.500px" width="8" height="7" viewBox="0 0 8 7"><path d="M.2 2.200 A5.600 5.600 0 0 1 7.800 2.200" fill="none" stroke="#ddd" stroke-width="1"/><path d="M1.600 3.800 A3.600 3.600 0 0 1 6.400 3.800 L4 6.800z" fill="#ddd"/></svg>
<div class="a" style="left:985px;top:195px;width:12.500px;height:6px;border-radius:3px;background:#3fc13a;border:1px solid #e8e8e8"></div>
<div class="a" style="left:989.500px;top:196.500px;width:2.500px;height:3px;background:#e6f7e3"></div>
<div class="t" style="left:999px;top:194.5px;font-size:5.5px;line-height:7.5px;height:7.5px;color:#e8e8e8;font-weight:bold;">85</div>
<div class="t" style="left:1005px;top:196.5px;font-size:3.5px;line-height:5.5px;height:5.5px;color:#e8e8e8;font-weight:bold;">%</div>
<div class="a" style="left:826.300px;top:214.7px;width:13.200px;height:1.300px;background:#f2f2f2"></div>
<div class="a" style="left:826.300px;top:219.0px;width:13.200px;height:1.300px;background:#f2f2f2"></div>
<div class="a" style="left:826.300px;top:223.29999999999998px;width:13.200px;height:1.300px;background:#f2f2f2"></div>
<div class="t" style="left:857px;top:213px;font-size:9.4px;line-height:11.4px;height:11.4px;color:#f4f4f4;font-weight:normal;text-shadow:0 0 .4px #fff">Ordens de Serviço</div>
<svg class="a" style="left:997px;top:212.500px" width="13" height="13" viewBox="0 0 13 13"><circle cx="5.600" cy="5.600" r="4.400" fill="none" stroke="#f2f2f2" stroke-width="1.200"/><path d="M8.800 8.800 L12.300 12" stroke="#f2f2f2" stroke-width="1.300"/></svg>
<div class="a" style="left:818px;top:234px;width:195px;height:19px;background:#0d0d0d"></div>
<div class="t" style="left:821px;top:240px;font-size:5.8px;line-height:7.8px;height:7.8px;color:#dadada;font-weight:normal;">8 resultados</div>
<svg class="a" style="left:910px;top:240px" width="10" height="7" viewBox="0 0 10 7"><path d="M1 1 L5 5 L9 1" fill="none" stroke="#f4f4f4" stroke-width="1.300"/></svg>
<div class="t r" style="right:14px;top:240px;font-size:5.8px;line-height:7.8px;height:7.8px;color:#dadada;font-weight:normal;">Filtros (0)</div>
<div class="a" style="left:820px;top:253px;width:190px;height:2px;background:#1d2029;border-radius:0 0 2px 2px"></div>
<div class="a" style="left:820px;top:261px;width:190px;height:16px;background:#fcc732"></div>
<div class="a" style="left:820px;top:277px;width:190px;height:59px;background:#1d2029;border-radius:0 0 2px 2px"></div>
<svg class="a" style="left:823px;top:264px" width="10" height="10" viewBox="0 0 10 10"><path d="M5.200 1 A3.900 3.700 0 1 1 2.700 7.600 L1 8.700 L1.500 6.300 A3.900 3.700 0 0 1 5.200 1z" fill="none" stroke="#2a1a0a" stroke-width="1"/></svg>
<div class="t" style="left:836px;top:264px;font-size:7px;line-height:9px;height:9px;color:#1a1208;font-weight:normal;letter-spacing:.12px">20231126000001</div>
<div class="t r" style="right:16px;top:266.2px;font-size:6.9px;line-height:8.9px;height:8.9px;color:#1a1208;font-weight:normal;">Agendado</div>
<div class="t" style="left:825px;top:281.7px;font-size:5.2px;line-height:7.2px;height:7.2px;color:#858a96;font-weight:normal;">Agendado</div>
<div class="t" style="left:918px;top:281.7px;font-size:5.2px;line-height:7.2px;height:7.2px;color:#858a96;font-weight:normal;">Iniciado</div>
<div class="t" style="left:825px;top:287.5px;font-size:7px;line-height:9px;height:9px;color:#f2f2f2;font-weight:normal;letter-spacing:.18px">26/11/2023 11:10</div>
<div class="t" style="left:918px;top:287.5px;font-size:7px;line-height:9px;height:9px;color:#f2f2f2;font-weight:normal;">-</div>
<div class="t" style="left:825px;top:299.5px;font-size:5.2px;line-height:7.2px;height:7.2px;color:#858a96;font-weight:normal;">Tarefa</div>
<div class="t" style="left:825px;top:305.5px;font-size:7px;line-height:9px;height:9px;color:#f2f2f2;font-weight:normal;">2.2 Instalação Fibra</div>
<div class="t" style="left:825px;top:317.5px;font-size:5.2px;line-height:7.2px;height:7.2px;color:#858a96;font-weight:normal;">Nome do Cliente</div>
<div class="t" style="left:825px;top:323px;font-size:7px;line-height:9px;height:9px;color:#f2f2f2;font-weight:normal;">A A Gabriel Henry Moraes</div>
<div class="a" style="left:820px;top:341px;width:190px;height:16px;background:#fb4a48"></div>
<div class="a" style="left:820px;top:357px;width:190px;height:59px;background:#1d2029;border-radius:0 0 2px 2px"></div>
<svg class="a" style="left:823px;top:344px" width="10" height="10" viewBox="0 0 10 10"><path d="M5.200 1 A3.900 3.700 0 1 1 2.700 7.600 L1 8.700 L1.500 6.300 A3.900 3.700 0 0 1 5.200 1z" fill="none" stroke="#2a1a0a" stroke-width="1"/></svg>
<div class="t" style="left:836px;top:344px;font-size:7px;line-height:9px;height:9px;color:#1a1208;font-weight:normal;letter-spacing:.12px">20240402000002</div>
<div class="t r" style="right:16px;top:346.2px;font-size:6.9px;line-height:8.9px;height:8.9px;color:#1a1208;font-weight:normal;">Cancelado</div>
<div class="t" style="left:825px;top:361.7px;font-size:5.2px;line-height:7.2px;height:7.2px;color:#858a96;font-weight:normal;">Agendado</div>
<div class="t" style="left:918px;top:361.7px;font-size:5.2px;line-height:7.2px;height:7.2px;color:#858a96;font-weight:normal;">Iniciado</div>
<div class="t" style="left:825px;top:367.5px;font-size:7px;line-height:9px;height:9px;color:#f2f2f2;font-weight:normal;letter-spacing:.18px">02/04/2024 17:39</div>
<div class="t" style="left:918px;top:367.5px;font-size:7px;line-height:9px;height:9px;color:#f2f2f2;font-weight:normal;">-</div>
<div class="t" style="left:825px;top:379.5px;font-size:5.2px;line-height:7.2px;height:7.2px;color:#858a96;font-weight:normal;">Tarefa</div>
<div class="t" style="left:825px;top:385.5px;font-size:7px;line-height:9px;height:9px;color:#f2f2f2;font-weight:normal;">2.1 Instalação Rádio</div>
<div class="t" style="left:825px;top:397.5px;font-size:5.2px;line-height:7.2px;height:7.2px;color:#858a96;font-weight:normal;">Nome do Cliente</div>
<div class="t" style="left:825px;top:403px;font-size:7px;line-height:9px;height:9px;color:#f2f2f2;font-weight:normal;">Henry Samuel Viana</div>
<div class="a" style="left:820px;top:421px;width:190px;height:16px;background:#fb4a48"></div>
<div class="a" style="left:820px;top:437px;width:190px;height:59px;background:#1d2029;border-radius:0 0 2px 2px"></div>
<svg class="a" style="left:823px;top:424px" width="10" height="10" viewBox="0 0 10 10"><path d="M5.200 1 A3.900 3.700 0 1 1 2.700 7.600 L1 8.700 L1.500 6.300 A3.900 3.700 0 0 1 5.200 1z" fill="none" stroke="#2a1a0a" stroke-width="1"/></svg>
<div class="t" style="left:836px;top:424px;font-size:7px;line-height:9px;height:9px;color:#1a1208;font-weight:normal;letter-spacing:.12px">20240402000001</div>
<div class="t r" style="right:16px;top:426.2px;font-size:6.9px;line-height:8.9px;height:8.9px;color:#1a1208;font-weight:normal;">Cancelado</div>
<div class="t" style="left:825px;top:441.7px;font-size:5.2px;line-height:7.2px;height:7.2px;color:#858a96;font-weight:normal;">Agendado</div>
<div class="t" style="left:918px;top:441.7px;font-size:5.2px;line-height:7.2px;height:7.2px;color:#858a96;font-weight:normal;">Iniciado</div>
<div class="t" style="left:825px;top:447.5px;font-size:7px;line-height:9px;height:9px;color:#f2f2f2;font-weight:normal;letter-spacing:.18px">03/04/2024 16:59</div>
<div class="t" style="left:918px;top:447.5px;font-size:7px;line-height:9px;height:9px;color:#f2f2f2;font-weight:normal;">-</div>
<div class="t" style="left:825px;top:459.5px;font-size:5.2px;line-height:7.2px;height:7.2px;color:#858a96;font-weight:normal;">Tarefa</div>
<div class="t" style="left:825px;top:465.5px;font-size:7px;line-height:9px;height:9px;color:#f2f2f2;font-weight:normal;">3.1 Suporte Técnico</div>
<div class="t" style="left:825px;top:477.5px;font-size:5.2px;line-height:7.2px;height:7.2px;color:#858a96;font-weight:normal;">Nome do Cliente</div>
<div class="t" style="left:825px;top:483px;font-size:7px;line-height:9px;height:9px;color:#f2f2f2;font-weight:normal;">Henry Samuel Viana</div>
<div class="a" style="left:820px;top:501px;width:190px;height:16px;background:#fb4a48"></div>
<div class="a" style="left:820px;top:517px;width:190px;height:59px;background:#1d2029;border-radius:0 0 2px 2px"></div>
<svg class="a" style="left:823px;top:504px" width="10" height="10" viewBox="0 0 10 10"><path d="M5.200 1 A3.900 3.700 0 1 1 2.700 7.600 L1 8.700 L1.500 6.300 A3.900 3.700 0 0 1 5.200 1z" fill="none" stroke="#2a1a0a" stroke-width="1"/></svg>
<div class="t" style="left:836px;top:504px;font-size:7px;line-height:9px;height:9px;color:#1a1208;font-weight:normal;letter-spacing:.12px">20230728000001</div>
<div class="t r" style="right:16px;top:506.2px;font-size:6.9px;line-height:8.9px;height:8.9px;color:#1a1208;font-weight:normal;">Cancelado</div>
<div class="t" style="left:825px;top:521.7px;font-size:5.2px;line-height:7.2px;height:7.2px;color:#858a96;font-weight:normal;">Agendado</div>
<div class="t" style="left:918px;top:521.7px;font-size:5.2px;line-height:7.2px;height:7.2px;color:#858a96;font-weight:normal;">Iniciado</div>
<div class="t" style="left:825px;top:527.5px;font-size:7px;line-height:9px;height:9px;color:#f2f2f2;font-weight:normal;letter-spacing:.18px">-</div>
<div class="t" style="left:918px;top:527.5px;font-size:7px;line-height:9px;height:9px;color:#f2f2f2;font-weight:normal;">-</div>
<div class="t" style="left:825px;top:539.5px;font-size:5.2px;line-height:7.2px;height:7.2px;color:#858a96;font-weight:normal;">Tarefa</div>
<div class="t" style="left:825px;top:545.5px;font-size:7px;line-height:9px;height:9px;color:#f2f2f2;font-weight:normal;">1.0 Viabilidade</div>
<div class="t" style="left:825px;top:557.5px;font-size:5.2px;line-height:7.2px;height:7.2px;color:#858a96;font-weight:normal;">Nome do Cliente</div>
<div class="t" style="left:825px;top:563px;font-size:7px;line-height:9px;height:9px;color:#f2f2f2;font-weight:normal;">Alice Priscila Moraes</div>
<div class="a" style="left:871px;top:588px;width:6px;height:6px;background:#cfcfcf"></div>
<div class="a" style="left:910px;top:586px;width:10px;height:10px;border-radius:50%;border:1.500px solid #cfcfcf;background:#8a8a8a"></div>
<svg class="a" style="left:951px;top:587px" width="7" height="8"><path d="M6.500 0 L0 4 L6.500 8z" fill="#cfcfcf"/></svg>
</div>
</body></html>
